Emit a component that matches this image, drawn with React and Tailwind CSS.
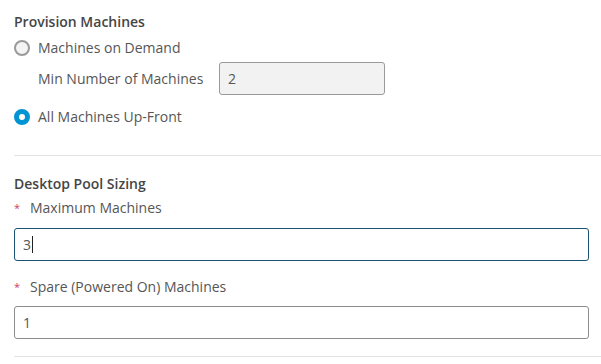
import React from "react";

const Radio = ({ checked, label }) => (
  <div className="flex items-center h-5">
    {checked ? (
      <span className="w-4 h-4 rounded-full border-[5px] border-[#0094d2] bg-white" />
    ) : (
      <span className="w-4 h-4 rounded-full border-2 border-[#9a9a9a] bg-[#f4f4f4]" />
    )}
    <span className="ml-2 text-[14px] leading-5 text-[#565656]">{label}</span>
  </div>
);

const RequiredLabel = ({ children, className = "" }) => (
  <div className={`flex items-center h-5 ${className}`}>
    <span className="w-4 text-[11px] leading-5 text-[#c9406a]">*</span>
    <span className="text-[14px] leading-5 text-[#565656]">{children}</span>
  </div>
);

export default function App() {
  return (
    <div
      className="w-[601px] h-[364px] bg-white pl-[14px] pt-[12px] overflow-hidden"
      style={{ fontFamily: '"Open Sans", "Liberation Sans", sans-serif' }}
    >
      <div className="text-[14px] leading-5 font-semibold text-[#454545]">Provision Machines</div>

      <div className="mt-[6px]">
        <Radio label="Machines on Demand" />
      </div>

      <div className="mt-1 flex items-center pl-[24px]">
        <span className="w-[181px] text-[14px] leading-5 text-[#565656]">Min Number of Machines</span>
        <div className="w-[166px] h-[33px] flex items-center px-2 bg-[#f2f2f2] border border-[#9a9a9a] rounded-[3px] text-[14px] text-[#565656]">
          2
        </div>
      </div>

      <div className="mt-3">
        <Radio checked label="All Machines Up-Front" />
      </div>

      <div className="mt-[28px] h-px bg-[#e2e2e2]" />

      <div className="mt-[18px] text-[14px] leading-5 font-semibold text-[#454545]">Desktop Pool Sizing</div>

      <RequiredLabel className="mt-1">Maximum Machines</RequiredLabel>

      <div className="mt-[10px] mr-[12px] h-[33px] flex items-center px-2 border border-[#18546f] rounded-[3px] text-[14px] text-[#565656]">
        3<span className="ml-px w-px h-[17px] bg-[#222]" />
      </div>

      <RequiredLabel className="mt-4">Spare (Powered On) Machines</RequiredLabel>

      <div className="mt-[9px] mr-[12px] h-[33px] flex items-center px-2 border border-[#8c8c8c] rounded-[3px] text-[14px] text-[#565656]">
        1
      </div>

      <div className="mt-[17px] h-px bg-[#e2e2e2]" />
    </div>
  );
}
